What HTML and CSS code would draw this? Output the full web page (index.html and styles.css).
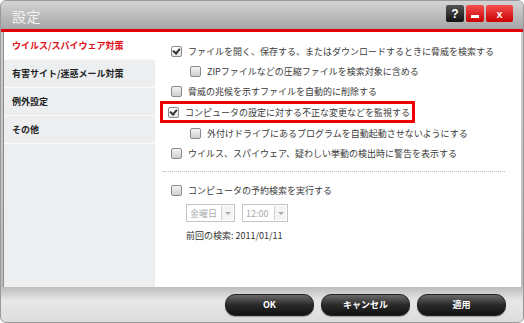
FILE: index.html
```html
<!DOCTYPE html>
<html lang="ja">
<head>
  <meta charset="UTF-8" />
  <title>設定</title>
  <link rel="stylesheet" href="styles.css">
</head>
<body>
<div class="window">
  <div class="titlebar">
    <span class="title">設定</span>
    <div class="title-buttons">
      <span class="tbtn help">?</span>
      <span class="tbtn min"><i></i></span>
      <span class="tbtn close">x</span>
    </div>
  </div>
  <div class="redline"></div>
  <div class="main">
    <ul class="sidebar">
      <li class="active">ウイルス/スパイウェア対策</li>
      <li>有害サイト/迷惑メール対策</li>
      <li>例外設定</li>
      <li>その他</li>
    </ul>
    <div class="content">
      <label class="opt"><span class="cb checked"></span>ファイルを開く、保存する、またはダウンロードするときに脅威を検索する</label>
      <label class="opt sub"><span class="cb"></span>ZIPファイルなどの圧縮ファイルを検索対象に含める</label>
      <label class="opt"><span class="cb"></span>脅威の兆候を示すファイルを自動的に削除する</label>
      <div class="highlight">
        <label class="opt"><span class="cb checked"></span>コンピュータの設定に対する不正な変更などを監視する</label>
      </div>
      <label class="opt sub"><span class="cb"></span>外付けドライブにあるプログラムを自動起動させないようにする</label>
      <label class="opt"><span class="cb"></span>ウイルス、スパイウェア、疑わしい挙動の検出時に警告を表示する</label>
      <div class="divider"></div>
      <label class="opt"><span class="cb"></span>コンピュータの予約検索を実行する</label>
      <div class="schedule">
        <span class="select wide">金曜日<b></b></span>
        <span class="select">12:00<b></b></span>
      </div>
      <div class="last">前回の検索: 2011/01/11</div>
    </div>
  </div>
  <div class="footer">
    <button class="btn">OK</button>
    <button class="btn">キャンセル</button>
    <button class="btn">適用</button>
  </div>
</div>
</body>
</html>
```

FILE: styles.css
```css
body {
  margin: 0;
  background: #fff;
  font-family: "Noto Sans CJK JP", "Liberation Sans", sans-serif;
  font-size: 9px;
  color: #3a3a3a;
}
.window {
  width: 522px;
  height: 321px;
  border: 1px solid #9a9a9a;
  border-radius: 6px;
  background: linear-gradient(#d0d0d0, #b8b8b8);
  overflow: hidden;
  display: flex;
  flex-direction: column;
}
.titlebar {
  height: 28px;
  display: flex;
  align-items: center;
  justify-content: space-between;
  background: linear-gradient(#d4d4d4, #a6a6a6);
}
.title {
  color: #f4f4f4;
  font-size: 14px;
  margin-left: 11px;
  margin-top: 1px;
  letter-spacing: 0.5px;
}
.title-buttons {
  display: flex;
  gap: 2px;
  margin-right: 10px;
  align-self: flex-start;
  margin-top: 4px;
}
.tbtn {
  height: 17px;
  display: flex;
  align-items: center;
  justify-content: center;
  color: #fff;
  font-family: "Liberation Sans", sans-serif;
  font-weight: bold;
  font-size: 12px;
  border-radius: 2px;
}
.help {
  width: 18px;
  background: linear-gradient(#555, #111);
}
.min {
  width: 18px;
  background: linear-gradient(#f45050, #c00);
}
.min i {
  width: 8px;
  height: 3px;
  background: #fff;
  margin-top: 6px;
}
.close {
  width: 27px;
  background: linear-gradient(#f45050, #c00);
  font-size: 11px;
}
.redline {
  height: 3px;
  background: #e0000a;
}
.main {
  height: 255px;
  display: flex;
  margin: 0 2px 0 2px;
  border-left: 1px solid #8c8c8c;
}
.sidebar {
  width: 151px;
  margin: 0;
  padding: 0;
  list-style: none;
  background: #eceef0;
}
.sidebar li {
  height: 27px;
  line-height: 27px;
  padding-left: 8px;
  border-bottom: 1px solid #fafafa;
  font-weight: bold;
  color: #222;
  font-size: 9px;
}
.sidebar li.active {
  background: #fff;
  color: #e0101a;
}
.content {
  flex: 1;
  background: #fff;
  padding: 9px 16px 0 8px;
}
.opt {
  display: flex;
  align-items: center;
  height: 20px;
  padding-left: 8px;
  white-space: nowrap;
}
.opt.sub {
  padding-left: 27px;
}
.cb {
  width: 9px;
  height: 9px;
  border: 1px solid #8a8a8a;
  border-radius: 2px;
  background: linear-gradient(#f4f4f4, #cfcfcf);
  margin-right: 6px;
  position: relative;
  flex: none;
}
.cb.checked {
  background: linear-gradient(#fff, #e4e4e4);
}
.cb.checked::after {
  content: "";
  position: absolute;
  left: 2px;
  top: 0px;
  width: 3px;
  height: 5px;
  border: solid #333;
  border-width: 0 2px 2px 0;
  transform: rotate(40deg);
}
.highlight {
  border: 3px solid #ee0000;
  width: 249px;
  margin-left: -3px;
  height: 16px;
  display: flex;
  align-items: center;
}
.highlight .opt {
  padding-left: 5px;
}
.divider {
  border-top: 1px dotted #bbb;
  margin: 8px 0 8px 0;
}
.schedule {
  display: flex;
  gap: 7px;
  padding-left: 23px;
  margin-top: 4px;
}
.select {
  height: 16px;
  border: 1px solid #c4c4c4;
  display: flex;
  align-items: center;
  color: #aaa;
  padding-left: 3px;
  width: 41px;
  justify-content: space-between;
  font-size: 9px;
}
.select.wide {
  width: 44px;
}
.select b {
  width: 11px;
  height: 14px;
  border-left: 1px solid #d0d0d0;
  background: #f4f4f4;
  position: relative;
  margin-right: 1px;
}
.select b::after {
  content: "";
  position: absolute;
  left: 3px;
  top: 6px;
  border: 3px solid transparent;
  border-top-color: #aaa;
}
.last {
  padding-left: 23px;
  margin-top: 7px;
  font-size: 9px;
  color: #333;
}
.footer {
  flex: 1;
  display: flex;
  justify-content: flex-end;
  align-items: center;
  gap: 7px;
  padding-right: 17px;
  background: linear-gradient(#bdbdbd, #e8e8e8 40%, #dcdcdc);
}
.btn {
  width: 89px;
  height: 22px;
  border: 1px solid #222;
  border-radius: 10px;
  background: linear-gradient(#6a6a6a, #2a2a2a 50%, #111);
  color: #fff;
  font-family: "Noto Sans CJK JP", sans-serif;
  font-size: 9px;
  font-weight: bold;
  box-shadow: 0 1px 1px rgba(0,0,0,0.3);
}
```
